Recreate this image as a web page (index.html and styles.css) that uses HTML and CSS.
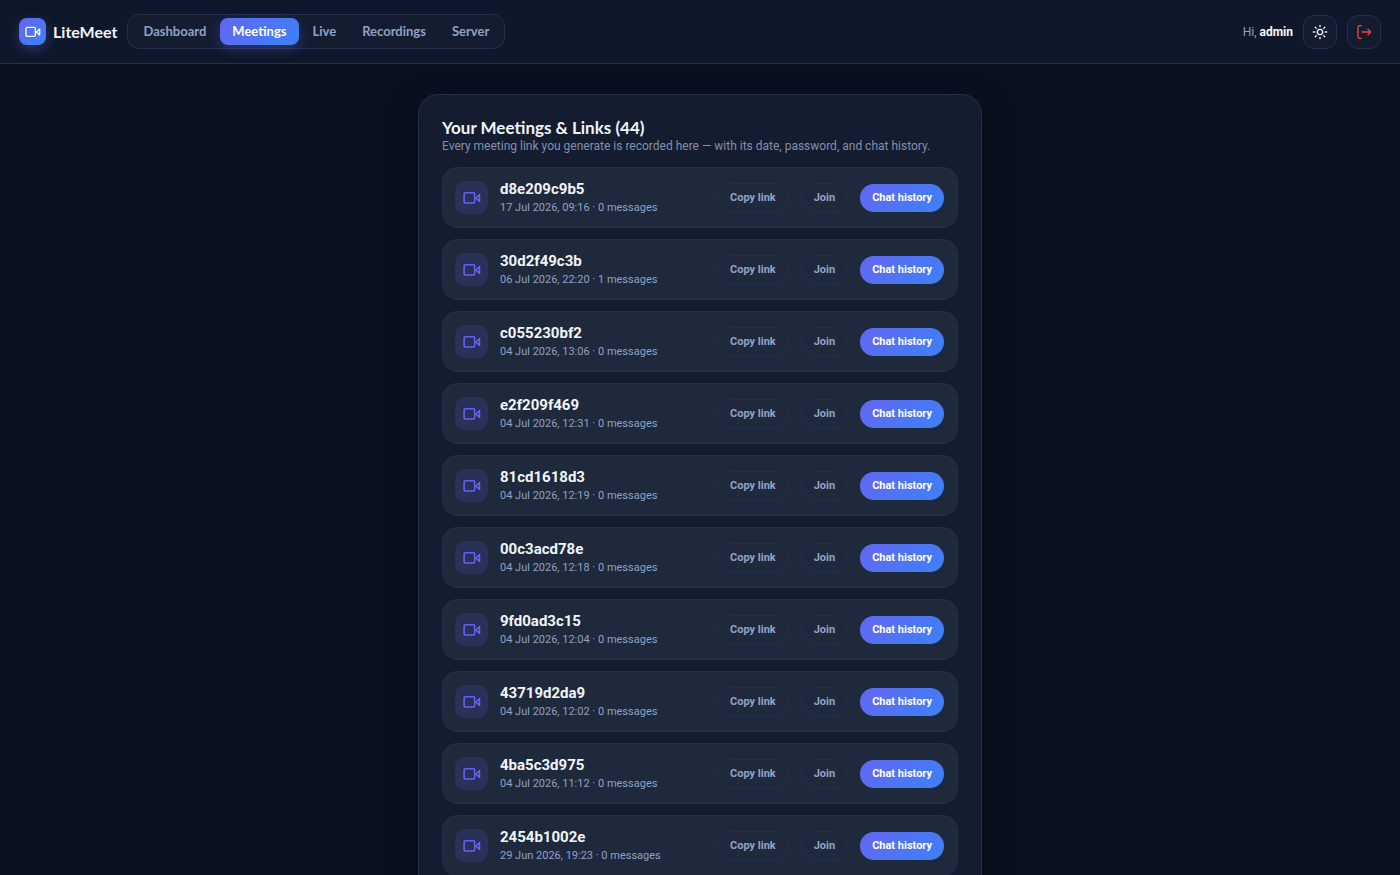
FILE: index.html
```html
<!DOCTYPE html>
<html lang="en">
<head>
  <meta charset="UTF-8" />
  <meta name="viewport" content="width=device-width, initial-scale=1.0"/>
  <title>Meetings | LiteMeet</title>
  <link rel="stylesheet" href="styles.css">
</head>
<body>
  <svg class="sprite" aria-hidden="true">
    <symbol id="icon-video" viewBox="0 0 24 24">
      <rect x="1.500" y="5" width="14" height="13.500" rx="1.500"/>
      <path d="M17 12l5-4.500v9z"/>
    </symbol>
  </svg>

  <header class="topbar">
    <div class="topbar-left">
      <a class="brand" href="#">
        <span class="brand-logo"><svg class="icon"><use href="#icon-video"/></svg></span>
        <span>LiteMeet</span>
      </a>
      <nav class="tabs">
        <a href="#">Dashboard</a>
        <a href="#" class="active">Meetings</a>
        <a href="#">Live</a>
        <a href="#">Recordings</a>
        <a href="#">Server</a>
      </nav>
    </div>
    <div class="topbar-right">
      <span class="hello">Hi, <strong>admin</strong></span>
      <button class="icon-btn" type="button" aria-label="Toggle theme">
        <svg class="icon" viewBox="0 0 24 24">
          <circle cx="12" cy="12" r="4"/>
          <path d="M12 2v2M12 20v2M4.9 4.9l1.5 1.5M17.6 17.6l1.5 1.5M2 12h2M20 12h2M4.9 19.1l1.5-1.5M17.6 6.4l1.5-1.5"/>
        </svg>
      </button>
      <button class="icon-btn danger" type="button" aria-label="Log out">
        <svg class="icon" viewBox="0 0 24 24">
          <path d="M8 21.500H5a2 2 0 0 1-2-2v-15a2 2 0 0 1 2-2h3M18 16l4-4-4-4M22 12H9"/>
        </svg>
      </button>
    </div>
  </header>

  <main class="page">
    <section class="card">
      <h2>Your Meetings &amp; Links (44)</h2>
      <p class="subtitle">Every meeting link you generate is recorded here — with its date, password, and chat history.</p>
      <div class="meeting-list" id="meetingList"></div>
    </section>
  </main>

  <script src="app.js"></script>
</body>
</html>
```

FILE: styles.css
```css
* {
  box-sizing: border-box;
}
body {
  margin: 0;
  min-height: 100vh;
  font-family: Lato, "Liberation Sans", sans-serif;
  font-size: 13px;
  color: #f1f5f9;
  background: #0a101f;
}
a {
  color: inherit;
  text-decoration: none;
}
button {
  font-family: inherit;
  cursor: pointer;
}
.sprite {
  display: none;
}
.icon {
  width: 18px;
  height: 18px;
  fill: none;
  stroke: currentColor;
  stroke-width: 2;
  stroke-linecap: round;
  stroke-linejoin: round;
}

/* top bar */
.topbar {
  display: flex;
  align-items: center;
  justify-content: space-between;
  height: 64px;
  padding: 0 19px;
  background: #0f172a;
  border-bottom: 1px solid #222f4d;
}
.topbar-left,
.topbar-right,
.brand {
  display: flex;
  align-items: center;
}
.topbar-left,
.topbar-right {
  gap: 10px;
}
.brand {
  gap: 7px;
  font-size: 16px;
  font-weight: 700;
}
.brand-logo {
  display: grid;
  place-items: center;
  width: 27px;
  height: 27px;
  border-radius: 8px;
  color: #fff;
  background: linear-gradient(135deg, #6366f1, #3b82f6);
  box-shadow: 0 4px 12px rgba(99, 102, 241, 0.35);
}
.brand-logo .icon {
  width: 16px;
  height: 16px;
}
.tabs {
  display: flex;
  gap: 2px;
  padding: 3px;
  background: #141c30;
  border: 1px solid #222f4d;
  border-radius: 12px;
}
.tabs a {
  padding: 0 12px;
  line-height: 27px;
  border-radius: 8px;
  font-weight: 700;
  color: #8ea2c6;
}
.tabs .active {
  color: #fff;
  background: linear-gradient(135deg, #6366f1, #3b82f6);
  box-shadow: 0 4px 12px rgba(99, 102, 241, 0.35);
}
.hello {
  font-family: Roboto, "Liberation Sans", sans-serif;
  font-size: 12px;
  color: #94a3b8;
}
.hello strong {
  color: #f8fafc;
}
.icon-btn {
  display: grid;
  place-items: center;
  width: 34px;
  height: 34px;
  padding: 0;
  color: #f1f5f9;
  background: #141c30;
  border: 1px solid #222f4d;
  border-radius: 11px;
}
.icon-btn .icon {
  width: 16px;
  height: 16px;
}
.icon-btn.danger {
  color: #ef4444;
}

/* meetings */
.page {
  padding: 30px 16px;
}
.card {
  max-width: 564px;
  margin: 0 auto;
  padding: 23px;
  background: #141c30;
  border: 1px solid #222f4d;
  border-radius: 20px;
  box-shadow: 0 12px 36px rgba(0, 0, 0, 0.3);
}
.card h2 {
  margin: 0;
  font-size: 17px;
  line-height: 20px;
}
.subtitle {
  margin: 0 0 13px;
  font-family: Roboto, "Liberation Sans", sans-serif;
  font-size: 12px;
  line-height: 16px;
  color: #8390ac;
}
.meeting-list {
  display: grid;
  gap: 11px;
}
.meeting {
  display: flex;
  align-items: center;
  gap: 12px;
  padding: 0 13px 0 12px;
  height: 61px;
  font-family: Roboto, "Liberation Sans", sans-serif;
  background: #1e293b;
  border: 1px solid #222f4d;
  border-radius: 15px;
}
.meeting-icon {
  display: grid;
  place-items: center;
  width: 33px;
  height: 33px;
  border-radius: 10px;
  color: #6366f1;
  background: #2a3158;
}
.meeting-info {
  flex: 1;
}
.meeting-info h3 {
  margin: 0;
  font-size: 15px;
  line-height: 20px;
}
.meeting-info p {
  margin: 0;
  font-size: 11px;
  line-height: 18px;
  color: #8ea2c6;
}
.pill {
  height: 30px;
  padding: 0 12px;
  font-size: 11px;
  font-weight: 700;
  color: #94a3c8;
  background: transparent;
  border: 1px solid #223052;
  border-radius: 15px;
}
.pill.primary {
  height: 28px;
  color: #fff;
  background: linear-gradient(135deg, #6366f1, #3b82f6);
  border: 0;
}
```

FILE: app.js
```js
const meetings = [
  { id: "d8e209c9b5", date: "17 Jul 2026, 09:16", messages: 0 },
  { id: "30d2f49c3b", date: "06 Jul 2026, 22:20", messages: 1 },
  { id: "c055230bf2", date: "04 Jul 2026, 13:06", messages: 0 },
  { id: "e2f209f469", date: "04 Jul 2026, 12:31", messages: 0 },
  { id: "81cd1618d3", date: "04 Jul 2026, 12:19", messages: 0 },
  { id: "00c3acd78e", date: "04 Jul 2026, 12:18", messages: 0 },
  { id: "9fd0ad3c15", date: "04 Jul 2026, 12:04", messages: 0 },
  { id: "43719d2da9", date: "04 Jul 2026, 12:02", messages: 0 },
  { id: "4ba5c3d975", date: "04 Jul 2026, 11:12", messages: 0 },
  { id: "2454b1002e", date: "29 Jun 2026, 19:23", messages: 0 }
];

function showMeetings() {
  const list = document.getElementById("meetingList");
  list.innerHTML = "";
  meetings.forEach(m => {
    const row = document.createElement("article");
    row.className = "meeting";
    row.innerHTML = `
      <span class="meeting-icon"><svg class="icon"><use href="#icon-video"/></svg></span>
      <div class="meeting-info">
        <h3>${m.id}</h3>
        <p>${m.date} · ${m.messages} messages</p>
      </div>
      <button class="pill" type="button">Copy link</button>
      <button class="pill" type="button">Join</button>
      <button class="pill primary" type="button">Chat history</button>
    `;
    list.appendChild(row);
  });
}

showMeetings();
```
